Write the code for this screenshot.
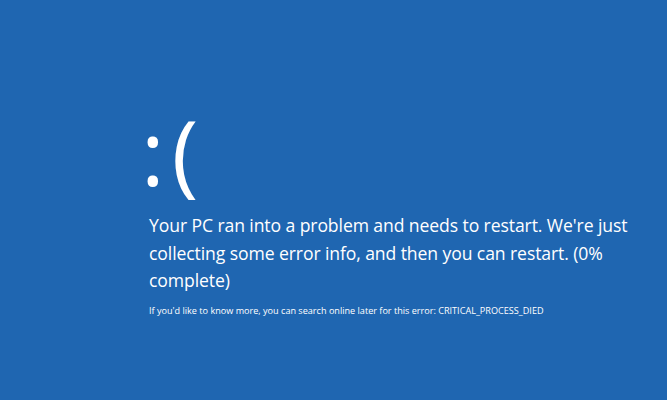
import React from "react";

export default function App() {
  return (
    <div className="w-[667px] h-[400px] bg-[#1f66b1] text-white font-['Open_Sans',sans-serif] overflow-hidden">
      <div className="pl-[141px] pt-[96px]">
        <div className="text-[90px] leading-[110px] font-normal tracking-[7px]">:(</div>
        <p className="pl-[8px] mt-[6px] w-[500px] text-[17.6px] leading-[27.5px] tracking-[-0.1px]">
          Your PC ran into a problem and needs to restart. We're just collecting some error info, and then you can restart. (0% complete)
        </p>
        <p className="pl-[8px] mt-[10px] text-[9.1px] leading-[12px]">
          If you'd like to know more, you can search online later for this error: CRITICAL_PROCESS_DIED
        </p>
      </div>
    </div>
  );
}
